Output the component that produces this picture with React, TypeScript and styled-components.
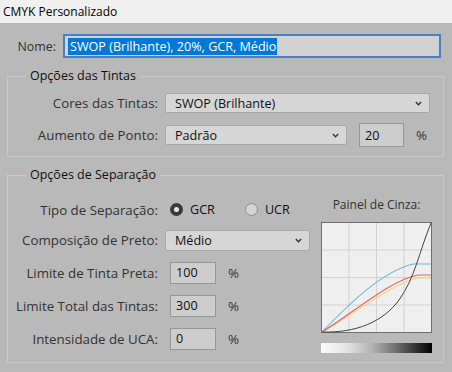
import React from "react";
import styled, { createGlobalStyle } from "styled-components";

const GlobalStyle = createGlobalStyle`
  html, body {
    margin: 0;
    padding: 0;
    background: #b9b9b9;
  }
  body {
    font-family: "Open Sans", "Noto Sans", sans-serif;
    font-size: 12px;
    color: #2e2e2e;
  }
`;

const Window = styled.div`
  width: 452px;
  height: 372px;
  background: #b9b9b9;
  display: flex;
  flex-direction: column;
  overflow: hidden;
`;

const TitleBar = styled.div`
  height: 23px;
  flex: none;
  background: #f0f0f0;
  display: flex;
  align-items: center;
  padding-left: 3px;
  font-size: 12px;
  color: #000;
`;

const Body = styled.div`
  padding: 11px 8px 0 7px;
  display: flex;
  flex-direction: column;
  gap: 9px;
`;

const NameRow = styled.div`
  display: grid;
  grid-template-columns: 49px 378px;
  column-gap: 7px;
  align-items: center;
  height: 24px;
`;

const Label = styled.span<{ $size?: number }>`
  text-align: right;
  white-space: nowrap;
  color: #333;
  font-size: ${({ $size }) => $size ?? 13.3}px;
`;

const NameInput = styled.div`
  box-sizing: border-box;
  height: 24px;
  border: 2px solid #4c7ec6;
  background: #d2d2d2;
  display: flex;
  align-items: center;
  padding-left: 3px;
`;

const Selected = styled.span`
  background: #0078d7;
  color: #fff;
  line-height: 17px;
  padding: 0 1px 0 2px;
  font-size: 12.6px;
`;

const Group = styled.fieldset`
  margin: 0;
  padding: 0 11px 9px 0;
  border: 1px solid #c9c9c9;
  min-width: 0;
`;

const Legend = styled.legend`
  margin-left: 18px;
  padding: 0 4px;
  font-size: 12.5px;
  line-height: 18px;
  color: #111;
`;

const Rows = styled.div<{ $top: number; $gap: number; $bottom?: number }>`
  display: grid;
  grid-template-columns: 150px auto;
  column-gap: 7px;
  row-gap: ${({ $gap }) => $gap}px;
  align-items: center;
  padding-top: ${({ $top }) => $top}px;
  padding-bottom: ${({ $bottom }) => $bottom ?? 0}px;
`;

const Controls = styled.div<{ $shift?: number }>`
  display: flex;
  align-items: center;
  margin-left: ${({ $shift }) => $shift ?? 0}px;
`;

const Select = styled.div<{ $w: number; $h?: number }>`
  box-sizing: border-box;
  width: ${({ $w }) => $w}px;
  height: ${({ $h }) => $h ?? 20}px;
  border: 1px solid #a8a8a8;
  border-radius: 2px;
  background: #d6d6d6;
  display: flex;
  align-items: center;
  justify-content: space-between;
  padding: 0 7px 0 9px;
  color: #111;
  font-size: 12.6px;
`;

const NumBox = styled.div<{ $w: number; $h: number; $left?: number }>`
  box-sizing: border-box;
  width: ${({ $w }) => $w}px;
  height: ${({ $h }) => $h}px;
  margin-left: ${({ $left }) => $left ?? 0}px;
  border: 1px solid #979797;
  background: #cdcdcd;
  display: flex;
  align-items: center;
  padding-left: 5px;
  color: #111;
  font-size: 12.6px;
`;

const Unit = styled.span`
  margin-left: 12px;
  color: #333;
  font-size: 13.3px;
`;

const SepBody = styled.div`
  display: flex;
  justify-content: space-between;
`;

const Radio = styled.label`
  display: flex;
  align-items: center;
  gap: 7px;
  color: #111;
  font-size: 12.6px;
  margin-right: 30px;
`;

const RadioDot = styled.span<{ $on?: boolean }>`
  box-sizing: border-box;
  width: 13px;
  height: 13px;
  border-radius: 50%;
  background: ${({ $on }) => ($on ? "#e8e8e8" : "#d4d4d4")};
  border: ${({ $on }) => ($on ? "4px solid #3b3b3b" : "1px solid #8f8f8f")};
`;

const Panel = styled.div`
  display: flex;
  flex-direction: column;
  align-items: center;
  padding-top: 13px;
  width: 111px;
`;

const PanelTitle = styled.span`
  line-height: 16px;
  color: #333;
  white-space: nowrap;
  margin-bottom: 9px;
`;

const Ramp = styled.div`
  width: 111px;
  height: 10px;
  margin-top: 10px;
  background: linear-gradient(
    to right,
    #fbfbfb 0%,
    #e6e6e6 22%,
    #b5b5b5 45%,
    #777 65%,
    #333 85%,
    #000 100%
  );
`;

function Chevron() {
  return (
    <svg width="7" height="5" viewBox="0 0 7 5">
      <polyline points="0.8,1 3.5,3.8 6.2,1" fill="none" stroke="#333" strokeWidth="1.3" />
    </svg>
  );
}

function GrayGraph() {
  const grid = [27.5, 55, 82.5];
  return (
    <svg width="111" height="111" viewBox="0 0 111 111">
      <rect x="0.5" y="0.5" width="110" height="110" fill="#efefef" stroke="#6e6e6e" />
      {grid.map((g) => (
        <g key={g} stroke="#d2d2d2" strokeWidth="1">
          <line x1={g + 0.5} y1="1" x2={g + 0.5} y2="110" />
          <line x1="1" y1={g + 0.5} x2="110" y2={g + 0.5} />
        </g>
      ))}
      <path d="M1,110 C31,79 61,50 92,42 L110,42" fill="none" stroke="#6fbad8" strokeWidth="1.1" />
      <path d="M1,110 C37,90 72,61 97,56 L110,56" fill="none" stroke="#f2d67c" strokeWidth="1.1" />
      <path d="M1,110 C36,88 70,58 97,53 L110,53" fill="none" stroke="#e8616a" strokeWidth="1.1" />
      <path d="M1,110 C35,111 62,100 78,78 S98,30 110,1" fill="none" stroke="#444" strokeWidth="1" />
    </svg>
  );
}

export default function App() {
  return (
    <Window>
      <GlobalStyle />
      <TitleBar>CMYK Personalizado</TitleBar>
      <Body>
        <NameRow>
          <Label $size={12.4}>Nome:</Label>
          <NameInput>
            <Selected>SWOP (Brilhante), 20%, GCR, Médio</Selected>
          </NameInput>
        </NameRow>

        <Group>
          <Legend>Opções das Tintas</Legend>
          <Rows $top={8} $gap={10}>
            <Label>Cores das Tintas:</Label>
            <Select $w={265}>
              SWOP (Brilhante)
              <Chevron />
            </Select>
            <Label>Aumento de Ponto:</Label>
            <Controls>
              <Select $w={182}>
                Padrão
                <Chevron />
              </Select>
              <NumBox $w={45} $h={24} $left={12}>
                20
              </NumBox>
              <Unit>%</Unit>
            </Controls>
          </Rows>
        </Group>

        <Group>
          <Legend>Opções de Separação</Legend>
          <SepBody>
            <Rows $top={16} $gap={10} $bottom={3}>
              <Label>Tipo de Separação:</Label>
              <Controls $shift={5}>
                <Radio>
                  <RadioDot $on />
                  GCR
                </Radio>
                <Radio>
                  <RadioDot />
                  UCR
                </Radio>
              </Controls>
              <Label>Composição de Preto:</Label>
              <Select $w={145} $h={21}>
                Médio
                <Chevron />
              </Select>
              <Label>Limite de Tinta Preta:</Label>
              <Controls $shift={5}>
                <NumBox $w={46} $h={22}>100</NumBox>
                <Unit>%</Unit>
              </Controls>
              <Label>Limite Total das Tintas:</Label>
              <Controls $shift={5}>
                <NumBox $w={46} $h={22}>300</NumBox>
                <Unit>%</Unit>
              </Controls>
              <Label>Intensidade de UCA:</Label>
              <Controls $shift={5}>
                <NumBox $w={46} $h={22}>0</NumBox>
                <Unit>%</Unit>
              </Controls>
            </Rows>
            <Panel>
              <PanelTitle>Painel de Cinza:</PanelTitle>
              <GrayGraph />
              <Ramp />
            </Panel>
          </SepBody>
        </Group>
      </Body>
    </Window>
  );
}
